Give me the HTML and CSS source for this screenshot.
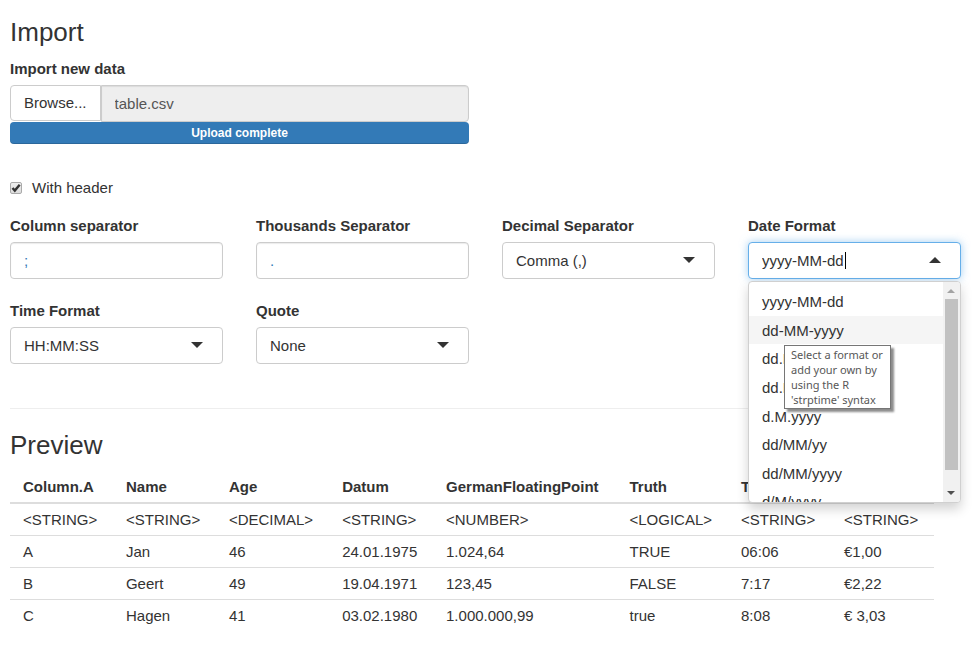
FILE: index.html
```html
<!DOCTYPE html>
<html lang="en">
<head>
<meta charset="utf-8">
<title>Import</title>
<link rel="stylesheet" href="styles.css">
</head>
<body>
<main class="page">
  <section>
    <h2 class="heading">Import</h2>
    <div class="grid">
      <div class="upload">
        <label class="label" for="file-name">Import new data</label>
        <div class="file-group">
          <button class="browse" type="button">Browse...</button>
          <input class="file-name" id="file-name" type="text" value="table.csv" readonly>
        </div>
        <div class="progress">Upload complete</div>
      </div>
      <div class="check-row">
        <span class="check">
          <input class="check-input" id="header" type="checkbox" checked>
          <svg class="check-mark" viewBox="0 0 12 12" aria-hidden="true"><path d="M2.500 6 4.800 8.600 9.700 2.800" fill="none" stroke="#333" stroke-width="2.400"/></svg>
        </span>
        <label for="header">With header</label>
      </div>
      <div class="field">
        <label class="label" for="colsep">Column separator</label>
        <input class="control sep" id="colsep" type="text" value=";">
      </div>
      <div class="field">
        <label class="label" for="thousep">Thousands Separator</label>
        <input class="control sep" id="thousep" type="text" value=".">
      </div>
      <div class="field">
        <label class="label" for="decsep">Decimal Separator</label>
        <div class="select"><select class="control" id="decsep"><option>Comma (,)</option></select></div>
      </div>
      <div class="field">
        <label class="label" for="datefmt">Date Format</label>
        <div class="select open">
          <input class="control" id="datefmt" type="text" value="yyyy-MM-dd" role="combobox" aria-expanded="true" aria-controls="formats">
          <span class="text-caret"></span>
          <div class="dropdown">
            <ul class="options" id="formats" role="listbox">
              <li class="option" role="option">yyyy-MM-dd</li>
              <li class="option active" role="option">dd-MM-yyyy</li>
              <li class="option" role="option">dd.MM.yy</li>
              <li class="option" role="option">dd.MM.yyyy</li>
              <li class="option" role="option">d.M.yyyy</li>
              <li class="option" role="option">dd/MM/yy</li>
              <li class="option" role="option">dd/MM/yyyy</li>
              <li class="option" role="option">d/M/yyyy</li>
            </ul>
            <div class="scrollbar">
              <svg class="scroll-arrow" viewBox="0 0 17 17" aria-hidden="true"><path d="M4 11h8L8 7z" fill="#a3a3a3"/></svg>
              <div class="thumb"></div>
              <svg class="scroll-arrow" viewBox="0 0 17 17" aria-hidden="true"><path d="M4 6h8L8 10z" fill="#505050"/></svg>
            </div>
          </div>
          <div class="tooltip" role="tooltip">Select a format or add your own by using the R 'strptime' syntax</div>
        </div>
      </div>
      <div class="field">
        <label class="label" for="timefmt">Time Format</label>
        <div class="select"><select class="control" id="timefmt"><option>HH:MM:SS</option></select></div>
      </div>
      <div class="field">
        <label class="label" for="quote">Quote</label>
        <div class="select"><select class="control" id="quote"><option>None</option></select></div>
      </div>
    </div>
  </section>
  <hr class="rule">
  <section>
    <h2 class="heading">Preview</h2>
    <table class="preview">
      <thead>
        <tr><th>Column.A</th><th>Name</th><th>Age</th><th>Datum</th><th>GermanFloatingPoint</th><th>Truth</th><th>Time</th><th>Money</th></tr>
      </thead>
      <tbody>
        <tr><td>&lt;STRING&gt;</td><td>&lt;STRING&gt;</td><td>&lt;DECIMAL&gt;</td><td>&lt;STRING&gt;</td><td>&lt;NUMBER&gt;</td><td>&lt;LOGICAL&gt;</td><td>&lt;STRING&gt;</td><td>&lt;STRING&gt;</td></tr>
        <tr><td>A</td><td>Jan</td><td>46</td><td>24.01.1975</td><td>1.024,64</td><td>TRUE</td><td>06:06</td><td>€1,00</td></tr>
        <tr><td>B</td><td>Geert</td><td>49</td><td>19.04.1971</td><td>123,45</td><td>FALSE</td><td>7:17</td><td>€2,22</td></tr>
        <tr><td>C</td><td>Hagen</td><td>41</td><td>03.02.1980</td><td>1.000.000,99</td><td>true</td><td>8:08</td><td>€ 3,03</td></tr>
      </tbody>
    </table>
  </section>
</main>
</body>
</html>
```
FILE: styles.css
```css
* { box-sizing: border-box; }

body {
  margin: 0;
  background: #fff;
  color: #333;
  font: 15px/22px "Liberation Sans", Arial, sans-serif;
}

input, select, button { margin: 0; font: inherit; color: inherit; }

.page { padding: 16px 15px 16px 10px; }

.heading {
  margin: 0 0 10px;
  font-size: 26px;
  font-weight: 400;
  line-height: 32px;
}

.grid {
  display: grid;
  grid-template-columns: repeat(4, 1fr);
  column-gap: 33px;
  row-gap: 21px;
}

.label {
  display: block;
  margin-bottom: 5px;
  font-weight: 700;
}

.upload { grid-column: 1 / 3; }
.file-group { display: flex; }

.browse {
  height: 36px;
  padding: 0 13px;
  border: 1px solid #ccc;
  border-radius: 4px 0 0 4px;
  background: #fff;
}

.file-name {
  flex: 1;
  min-width: 0;
  height: 37px;
  padding: 0 13px;
  border: 1px solid #ccc;
  border-radius: 0 4px 4px 0;
  background: #eee;
  color: #555;
  box-shadow: inset 0 1px 1px rgba(0, 0, 0, .08);
}

.progress {
  height: 22px;
  border-radius: 4px;
  background: #337ab7;
  box-shadow: inset 0 -1px 0 rgba(0, 0, 0, .15);
  color: #fff;
  font-size: 12px;
  font-weight: 700;
  text-align: center;
}

.check-row {
  grid-column: 1 / -1;
  display: flex;
  align-items: center;
  gap: 10px;
  margin: 12px 0 -5px;
}

.check { position: relative; width: 12px; height: 12px; }

.check-input {
  appearance: none;
  display: block;
  width: 12px;
  height: 12px;
  border: 1px solid #aaa;
  border-radius: 2px;
  background: linear-gradient(#eee, #ddd);
}

.check-mark { position: absolute; inset: 0; pointer-events: none; }

.control {
  appearance: none;
  display: block;
  width: 100%;
  height: 37px;
  padding: 0 13px;
  border: 1px solid #ccc;
  border-radius: 4px;
  outline: 0;
  background: #fff;
}

.sep { color: #337ab7; box-shadow: inset 0 1px 1px rgba(0, 0, 0, .08); }

.select { position: relative; }

.select::after {
  content: "";
  position: absolute;
  top: 15px;
  right: 20px;
  border: 0 solid transparent;
  border-width: 6px 6px 0;
  border-top-color: #333;
}

.open::after {
  border-width: 0 6px 6px;
  border-bottom-color: #333;
}

.open .control {
  border-color: #66afe9;
  box-shadow: 0 0 8px rgba(102, 175, 233, .6);
}

.text-caret {
  position: absolute;
  top: 10px;
  left: 97px;
  width: 1px;
  height: 17px;
  background: #000;
}

.dropdown {
  position: absolute;
  z-index: 1;
  top: 39px;
  left: 0;
  right: 0;
  display: flex;
  height: 222px;
  overflow: hidden;
  border: 1px solid #d0d0d0;
  border-radius: 4px;
  background: #fff;
  box-shadow: 0 6px 12px rgba(0, 0, 0, .18);
}

.options {
  flex: 1;
  display: grid;
  grid-auto-rows: 1fr;
  height: 234px;
  margin: 0;
  padding: 5px 0 0;
  list-style: none;
}

.option { padding: 4px 13px 2px; }
.active { background: #f5f5f5; }

.scrollbar {
  display: flex;
  flex-direction: column;
  width: 17px;
  background: #f1f1f1;
}

.scroll-arrow { display: block; width: 17px; height: 17px; }
.thumb { width: 13px; height: 171px; margin: 0 2px auto; background: #c1c1c1; }

.tooltip {
  position: absolute;
  z-index: 2;
  top: 103px;
  left: 36px;
  width: 107px;
  padding: 1px 2px 1px 6px;
  border: 1px solid #767676;
  background: #fff;
  box-shadow: 3px 3px 2px rgba(0, 0, 0, .45);
  color: #575757;
  font: 11px/15px "Noto Sans", "Open Sans", sans-serif;
}

.rule {
  margin: 44px 0 20px;
  border: 0;
  border-top: 1px solid #eee;
}

.preview { width: calc(100% - 27px); border-collapse: collapse; }

.preview th, .preview td {
  padding: 5px 13px 4px;
  border-top: 1px solid #ddd;
  text-align: left;
  white-space: nowrap;
}

.preview th {
  border-top: 0;
  border-bottom: 2px solid #ddd;
}
```
